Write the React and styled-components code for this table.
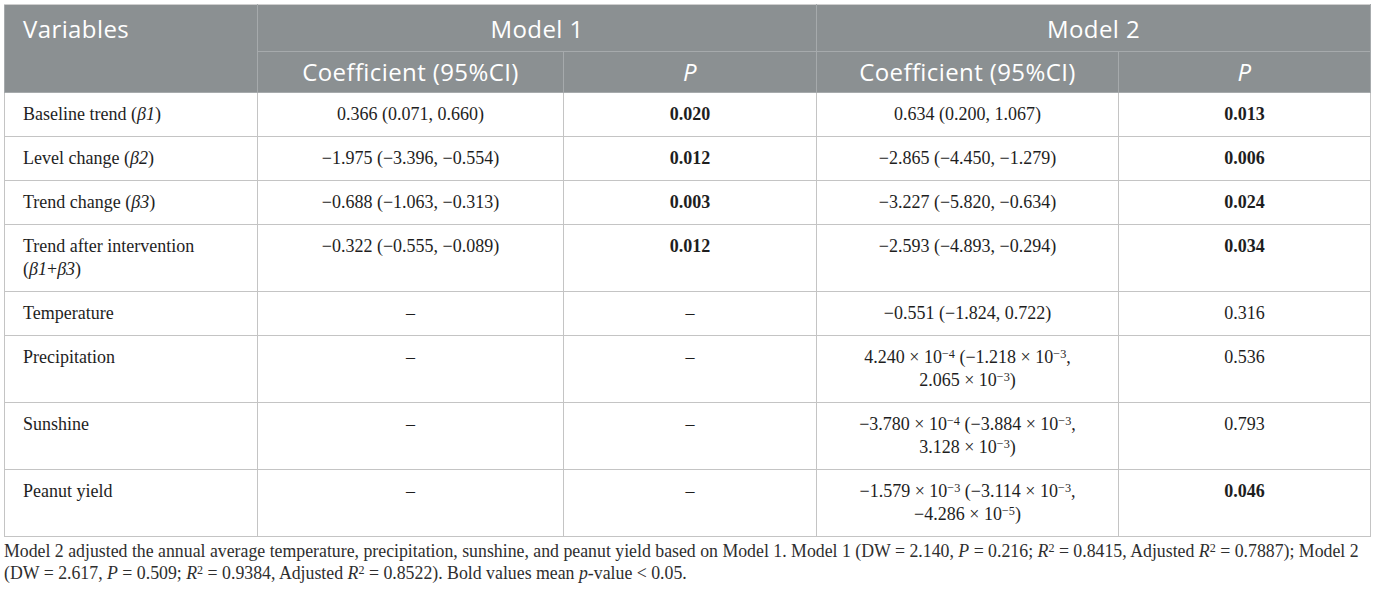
import React from 'react';
import styled, { createGlobalStyle } from 'styled-components';

const GlobalStyle = createGlobalStyle`
  body {
    margin: 0;
    background: #ffffff;
  }
`;

const Page = styled.div`
  padding: 4px 5px 0 4px;
`;

const Table = styled.table`
  width: 1366px;
  table-layout: fixed;
  border-collapse: collapse;
  border: 1px solid #cfcfcf;
  font-family: "Liberation Serif", "Times New Roman", serif;
  font-size: 18px;
  color: #1e1e1e;
`;

const Col = styled.col`
  width: ${props => props.$w}px;
`;

const HeadCell = styled.th`
  background: #8b9092;
  color: #ffffff;
  font-family: "Open Sans", "Liberation Sans", sans-serif;
  font-weight: 400;
  font-size: 24px;
  letter-spacing: 0.4px;
  line-height: 30px;
  padding: ${props => (props.$tall ? '9px 18px 7px' : '5px 18px')};
  text-align: ${props => (props.$left ? 'left' : 'center')};
  vertical-align: ${props => (props.$top ? 'top' : 'middle')};
  border: 1px solid #a6aaac;
  border-top-color: #cfcfcf;
  font-style: ${props => (props.$italic ? 'italic' : 'normal')};
`;

const Cell = styled.td`
  padding: 10px 18px;
  line-height: 23px;
  vertical-align: top;
  text-align: ${props => (props.$left ? 'left' : 'center')};
  font-weight: ${props => (props.$bold ? 700 : 400)};
  border: 1px solid #c4c4c4;
`;

const Em = styled.i`
  font-style: italic;
`;

const Sup = styled.sup`
  font-size: 0.68em;
  line-height: 0;
  vertical-align: 0.45em;
`;

const Note = styled.p`
  margin: 3px 0 0;
  font-family: "Liberation Serif", "Times New Roman", serif;
  font-size: 17.8px;
  line-height: 22px;
  color: #2e2e2e;
`;

const M = '\u2212';
const Ten = ({ e }) => (
  <>
    {' × 10'}
    <Sup>{M + e}</Sup>
  </>
);

const rows = [
  { label: <>Baseline trend (<Em>β1</Em>)</>, c1: '0.366 (0.071, 0.660)', p1: '0.020', b1: true, c2: '0.634 (0.200, 1.067)', p2: '0.013', b2: true },
  { label: <>Level change (<Em>β2</Em>)</>, c1: `${M}1.975 (${M}3.396, ${M}0.554)`, p1: '0.012', b1: true, c2: `${M}2.865 (${M}4.450, ${M}1.279)`, p2: '0.006', b2: true },
  { label: <>Trend change (<Em>β3</Em>)</>, c1: `${M}0.688 (${M}1.063, ${M}0.313)`, p1: '0.003', b1: true, c2: `${M}3.227 (${M}5.820, ${M}0.634)`, p2: '0.024', b2: true },
  { label: <>Trend after intervention<br />(<Em>β1</Em>+<Em>β3</Em>)</>, c1: `${M}0.322 (${M}0.555, ${M}0.089)`, p1: '0.012', b1: true, c2: `${M}2.593 (${M}4.893, ${M}0.294)`, p2: '0.034', b2: true },
  { label: 'Temperature', c1: '–', p1: '–', c2: `${M}0.551 (${M}1.824, 0.722)`, p2: '0.316' },
  {
    label: 'Precipitation', c1: '–', p1: '–',
    c2: <>4.240<Ten e="4" /> ({M}1.218<Ten e="3" />,<br />2.065<Ten e="3" />)</>,
    p2: '0.536',
  },
  {
    label: 'Sunshine', c1: '–', p1: '–',
    c2: <>{M}3.780<Ten e="4" /> ({M}3.884<Ten e="3" />,<br />3.128<Ten e="3" />)</>,
    p2: '0.793',
  },
  {
    label: 'Peanut yield', c1: '–', p1: '–',
    c2: <>{M}1.579<Ten e="3" /> ({M}3.114<Ten e="3" />,<br />{M}4.286<Ten e="5" />)</>,
    p2: '0.046', b2: true,
  },
];

export default function App() {
  return (
    <Page>
      <GlobalStyle />
      <Table>
        <colgroup>
          <Col $w={253} />
          <Col $w={306} />
          <Col $w={253} />
          <Col $w={302} />
          <Col $w={252} />
        </colgroup>
        <thead>
          <tr>
            <HeadCell rowSpan={2} $left $top $tall>Variables</HeadCell>
            <HeadCell colSpan={2} $tall>Model 1</HeadCell>
            <HeadCell colSpan={2} $tall>Model 2</HeadCell>
          </tr>
          <tr>
            <HeadCell>Coefficient (95%CI)</HeadCell>
            <HeadCell $italic>P</HeadCell>
            <HeadCell>Coefficient (95%CI)</HeadCell>
            <HeadCell $italic>P</HeadCell>
          </tr>
        </thead>
        <tbody>
          {rows.map((r, i) => (
            <tr key={i}>
              <Cell $left>{r.label}</Cell>
              <Cell>{r.c1}</Cell>
              <Cell $bold={r.b1}>{r.p1}</Cell>
              <Cell>{r.c2}</Cell>
              <Cell $bold={r.b2}>{r.p2}</Cell>
            </tr>
          ))}
        </tbody>
      </Table>
      <Note>
        Model 2 adjusted the annual average temperature, precipitation, sunshine, and peanut yield based on Model 1.
        Model 1 (DW = 2.140, <Em>P</Em> = 0.216; <Em>R</Em><Sup>2</Sup> = 0.8415, Adjusted <Em>R</Em><Sup>2</Sup> = 0.7887);
        Model 2 (DW = 2.617, <Em>P</Em> = 0.509; <Em>R</Em><Sup>2</Sup> = 0.9384, Adjusted <Em>R</Em><Sup>2</Sup> = 0.8522).
        Bold values mean <Em>p</Em>-value &lt; 0.05.
      </Note>
    </Page>
  );
}
